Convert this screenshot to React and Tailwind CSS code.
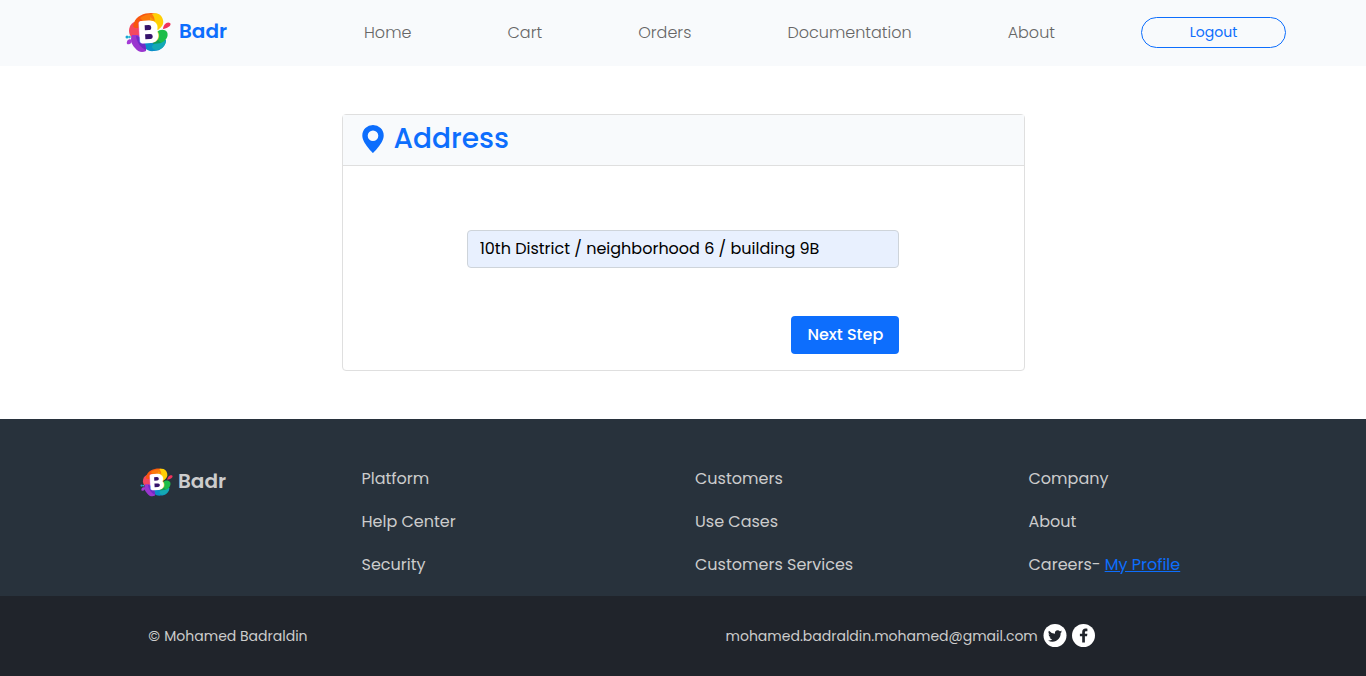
import { useState } from "react";

const navLinks = ["Home", "Cart", "Orders", "Documentation", "About"];

const footerColumns = [
  ["Platform", "Help Center", "Security"],
  ["Customers", "Use Cases", "Customers Services"],
  ["Company", "About", "Careers-"],
];

function Logo({ className }) {
  return (
    <svg viewBox="0 0 46 42" className={className} aria-hidden="true">
      <path d="M14 10C8 10 4 14 4 20c0 5 4 9 10 9h8V12z" fill="#f4485f" />
      <path d="M9 12C11 5 19 2 26 2c6 0 10 3 11 8l-8 8-17-1c-3 0-5-1-3-5z" fill="#f8560f" />
      <path d="M15 7c5-4 12-5 18-3l-1 7-12 1z" fill="#fb7a0c" />
      <path d="M27 3c5-2 10 1 11 6 1 4-1 7-5 10l-6-3c3-4 4-8 0-13z" fill="#ffcf05" />
      <path d="M25 6c4 2 6 5 5 10l-5 1z" fill="#fa9c07" />
      <path d="M17 30c0 6 5 11 12 10 7 0 12-5 12-11l-12-3z" fill="#0b8fc8" />
      <path d="M27 35c4-5 9-6 14-5-1 5-4 8-9 9-3 0-5-1-5-4z" fill="#14a9b4" />
      <path d="M32 21c3-3 8-3 10 0 2 4-1 9-6 11l-8-2c0-4 1-7 4-9z" fill="#1dbd49" />
      <path d="M29 25l7 7-8 1z" fill="#0f9d58" />
      <path d="M7 24c-2 4-1 9 3 13 3 4 7 5 11 3 1-6-3-11-8-16z" fill="#9a35cf" />
      <path d="M11 25c6 1 10 7 10 14-5-2-9-7-10-14z" fill="#6d2cc6" />
      <path d="M38 18c0-4 4-8 7-6 2 2-2 5-7 6z" fill="#f0325c" />
      <path d="M2 33c-1-3 2-6 5-4 0 3-2 5-5 4z" fill="#a43bd6" />
      <circle cx="2" cy="26" r="1.500" fill="#17a5d4" />
      <circle cx="4.500" cy="26" r="1.300" fill="#2fb8d0" />
      <g transform="rotate(-3 24 21)">
        <text
          x="23.500"
          y="29.500"
          textAnchor="middle"
          fontFamily="Poppins, sans-serif"
          fontWeight="700"
          fontSize="25"
          fill="#ffffff"
          stroke="#ffffff"
          strokeWidth="5"
          strokeLinejoin="round"
        >
          B
        </text>
        <path d="M20 14h4a2.500 2.500 0 0 1 0 5h-4z" fill="#35136b" />
        <path d="M20 23h5a2.500 2.500 0 0 1 0 5h-5z" fill="#35136b" />
      </g>
    </svg>
  );
}

function PinIcon() {
  return (
    <svg viewBox="0 0 22 28" className="h-7 w-[22px]" fill="#0d6efd" aria-hidden="true">
      <path
        fillRule="evenodd"
        d="M11 28S.3 18 .3 10.500a10.700 10.500 0 0 1 21.400 0C21.700 18 11 28 11 28zm0-12a5.300 5.300 0 1 0 0-10.600 5.300 5.300 0 0 0 0 10.600z"
      />
    </svg>
  );
}

function TwitterIcon() {
  return (
    <svg viewBox="0 0 24 24" className="size-6" aria-hidden="true">
      <circle cx="12" cy="11.500" r="11.500" fill="#ffffff" />
      <path
        transform="translate(5 4.500) scale(.88)"
        fill="#20242b"
        d="M5.026 15c6.038 0 9.341-5.003 9.341-9.334q.002-.211-.006-.422A6.700 6.700 0 0 0 16 3.542a6.700 6.700 0 0 1-1.889.518 3.300 3.300 0 0 0 1.447-1.817 6.500 6.500 0 0 1-2.087.793A3.286 3.286 0 0 0 7.875 6.030a9.320 9.320 0 0 1-6.767-3.429 3.290 3.290 0 0 0 1.018 4.382A3.300 3.300 0 0 1 .640 6.575v.045a3.290 3.290 0 0 0 2.632 3.218 3.200 3.200 0 0 1-.865.115 3 3 0 0 1-.614-.057 3.280 3.280 0 0 0 3.067 2.277A6.600 6.600 0 0 1 .780 13.580a6 6 0 0 1-.780-.045A9.340 9.340 0 0 0 5.026 15"
      />
    </svg>
  );
}

function FacebookIcon() {
  return (
    <svg viewBox="0 0 24 24" className="size-6" aria-hidden="true">
      <circle cx="11.500" cy="11.500" r="11.500" fill="#ffffff" />
      <path
        transform="translate(-.5 -.5)"
        fill="#20242b"
        d="M13.400 19v-6.200h2.100l.4-2.500h-2.500V8.900c0-.8.4-1.200 1.200-1.200h1.300V5.300c-.4-.1-1.100-.2-1.900-.2-2 0-3.300 1.200-3.300 3.400v1.800H8.400v2.500h2.300V19z"
      />
    </svg>
  );
}

export default function App() {
  const [address, setAddress] = useState("10th District / neighborhood 6 / building 9B");

  return (
    <div className="flex min-h-screen flex-col bg-white font-['Poppins','Inter',sans-serif] text-base">
      <header className="flex h-[66px] items-center bg-[#f8fafc] px-20 pb-0.5">
        <a href="#home" className="ml-[45px] flex w-[239px] shrink-0 items-center gap-2">
          <Logo className="h-[42px] w-[46px]" />
          <span className="pb-0.5 text-xl leading-6 font-semibold text-[#0d6efd]">Badr</span>
        </a>
        <nav className="mr-[86px] flex flex-1 justify-between pt-0.5">
          {navLinks.map((label) => (
            <a key={label} href={"#" + label.toLowerCase()} className="text-base font-light text-[#666666]">
              {label}
            </a>
          ))}
        </nav>
        <button
          type="button"
          className="h-[31px] w-[145px] rounded-full border border-[#0d6efd] text-sm text-[#0d6efd]"
        >
          Logout
        </button>
      </header>

      <main className="flex-1 py-12">
        <section className="mx-auto w-1/2 rounded border border-[#dfdfdf]">
          <h1 className="flex h-[51px] items-center gap-2.5 border-b border-[#dfdfdf] bg-[#f8fafc] px-[19px] pb-0.5 text-[28px] font-medium text-[#0d6efd]">
            <PinIcon />
            Address
          </h1>
          <form className="px-4 pt-16 pb-4" onSubmit={(event) => event.preventDefault()}>
            <div className="mx-auto flex w-2/3 flex-col items-end gap-12">
              <input
                type="text"
                aria-label="Address"
                value={address}
                onChange={(event) => setAddress(event.target.value)}
                className="h-[38px] w-full rounded border border-[#ced4da] bg-[#e8f0fe] px-3 pb-0.5 text-base text-black"
              />
              <button type="submit" className="h-[38px] w-[108px] rounded bg-[#0d6efd] text-base font-medium text-white">
                Next Step
              </button>
            </div>
          </form>
        </section>
      </main>

      <footer className="text-[#cccccc]">
        <div className="flex bg-[#28323c] pt-12 pb-[19px]">
          <div className="flex w-1/4 shrink-0 items-start pl-[140px]">
            <a href="#home" className="flex items-center gap-[5px]">
              <Logo className="h-[30px] w-[33px]" />
              <span className="pb-0.5 text-xl leading-7 font-semibold">Badr</span>
            </a>
          </div>
          <div className="grid flex-1 grid-cols-3 px-3">
            {footerColumns.map((items) => (
              <ul key={items[0]} className="flex flex-col gap-[19px] px-2">
                {items.map((item) => (
                  <li key={item} className="leading-6">
                    {item}
                    {item === "Careers-" && (
                      <a href="#profile" className="ml-1 text-[#0d6efd] underline">
                        My Profile
                      </a>
                    )}
                  </li>
                ))}
              </ul>
            ))}
          </div>
        </div>
        <div className="flex h-20 items-center bg-[#20242b] text-sm">
          <p className="w-1/3 text-center">
            <span className="font-['Inter'] font-light">©</span> Mohamed Badraldin
          </p>
          <div className="flex w-2/3 items-center justify-center gap-[5px]">
            <a href="mailto:mohamed.badraldin.mohamed@gmail.com">mohamed.badraldin.mohamed@gmail.com</a>
            <a href="#twitter" aria-label="Twitter">
              <TwitterIcon />
            </a>
            <a href="#facebook" aria-label="Facebook">
              <FacebookIcon />
            </a>
          </div>
        </div>
      </footer>
    </div>
  );
}
